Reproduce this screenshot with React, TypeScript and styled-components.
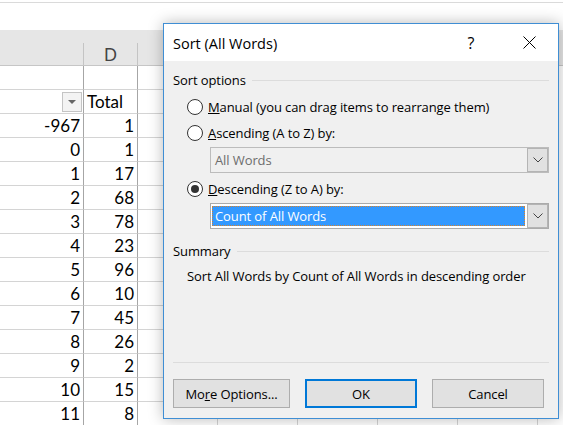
import React from "react";
import styled, { createGlobalStyle, css } from "styled-components";

const Global = createGlobalStyle`
  html, body { margin: 0; padding: 0; background: #fff; }
  body { width: 563px; height: 425px; overflow: hidden; }
`;

const Page = styled.div`
  position: relative;
  width: 563px;
  height: 425px;
  overflow: hidden;
  background: #fff;
  font-family: Lato, "Liberation Sans", sans-serif;
`;

const TopStrip = styled.div`
  margin-top: 2px;
  height: 27px;
  border-top: 1px solid #dadada;
  background: #fff;
`;

const HeaderBand = styled.div`
  height: 36px;
  box-sizing: border-box;
  background: #e6e6e6;
  padding-top: 13px;
  border-bottom: 1px solid #c6c6c6;
  display: flex;
`;

const HeaderCell = styled.div<{ $w: number }>`
  width: ${(p) => p.$w}px;
  flex: none;
  box-sizing: border-box;
  border-right: 1px solid #c4c4c4;
  display: flex;
  align-items: center;
  justify-content: center;
  font-size: 17px;
  color: #444;
`;

const Row = styled.div`
  display: flex;
  height: 24px;
`;

const Cell = styled.div<{ $w: number; $strong?: boolean; $align?: string }>`
  width: ${(p) => p.$w}px;
  flex: none;
  box-sizing: border-box;
  border-right: 1px solid ${(p) => (p.$strong ? "#a6a6a6" : "#d4d4d4")};
  border-bottom: 1px solid #d4d4d4;
  display: flex;
  align-items: center;
  justify-content: ${(p) => (p.$align === "left" ? "flex-start" : "flex-end")};
  padding: 0 3px;
  font-size: 17px;
  color: #000;
`;

const FilterButton = styled.div`
  width: 20px;
  height: 20px;
  box-sizing: border-box;
  border: 1px solid #c4c4c4;
  background: #f3f3f3;
  margin-right: -2px;
  display: flex;
  align-items: center;
  justify-content: center;
  &::after {
    content: "";
    border-left: 4px solid transparent;
    border-right: 4px solid transparent;
    border-top: 4px solid #666;
    margin-top: 1px;
  }
`;

const Dialog = styled.div`
  position: absolute;
  left: 163px;
  top: 23px;
  width: 396px;
  height: 396px;
  box-sizing: border-box;
  border: 1px solid #3f8ed4;
  box-shadow: 0 0 14px rgba(0, 0, 0, 0.28);
  display: flex;
  flex-direction: column;
  font-family: "Open Sans", "Noto Sans", sans-serif;
  font-size: 13px;
  letter-spacing: -0.1px;
  color: #000;
`;

const TitleBar = styled.div`
  height: 37px;
  flex: none;
  background: #fff;
  display: flex;
  align-items: center;
  padding-left: 9px;
`;

const Title = styled.div`
  flex: 1;
  font-size: 14.5px;
  letter-spacing: 0;
  padding-top: 1px;
`;

const TitleButton = styled.div`
  width: 58px;
  height: 37px;
  display: flex;
  align-items: center;
  justify-content: center;
  font-size: 16px;
`;

const Body = styled.div`
  flex: 1;
  background: #f0f0f0;
  display: flex;
  flex-direction: column;
  padding: 9px 9px 10px 9px;
`;

const GroupHeader = styled.div<{ $mt?: number }>`
  display: flex;
  align-items: center;
  gap: 6px;
  height: 20px;
  margin-top: ${(p) => p.$mt ?? 0}px;
  &::after {
    content: "";
    flex: 1;
    height: 1px;
    background: #dcdcdc;
  }
`;

const RadioRow = styled.div<{ $mt?: number }>`
  display: flex;
  align-items: center;
  height: 26px;
  padding-left: 14px;
  gap: 5px;
  margin-top: ${(p) => p.$mt ?? 0}px;
`;

const RadioCircle = styled.span<{ $checked?: boolean }>`
  width: 16px;
  height: 16px;
  box-sizing: border-box;
  border: 1px solid #333;
  border-radius: 50%;
  background: #fff;
  flex: none;
  display: flex;
  align-items: center;
  justify-content: center;
  &::after {
    content: "";
    width: 8px;
    height: 8px;
    border-radius: 50%;
    background: #333;
    display: ${(p) => (p.$checked ? "block" : "none")};
  }
`;

const Combo = styled.div<{ $disabled?: boolean; $mt?: number }>`
  margin-left: 37px;
  margin-top: ${(p) => p.$mt ?? 0}px;
  height: 26px;
  box-sizing: border-box;
  display: flex;
  border: 1px solid ${(p) => (p.$disabled ? "#bcbcbc" : "#ababab")};
  background: ${(p) => (p.$disabled ? "#f0f0f0" : "#fff")};
`;

const ComboValue = styled.div<{ $selected?: boolean; $disabled?: boolean }>`
  flex: 1;
  display: flex;
  align-items: center;
  padding-left: 4px;
  color: ${(p) => (p.$disabled ? "#6d6d6d" : "#000")};
  ${(p) =>
    p.$selected &&
    css`
      margin: 2px 2px 2px 1px;
      padding-left: 3px;
      background: #3399ff;
      color: #fff;
      outline: 1px dotted #d9822b;
      outline-offset: -1px;
    `}
`;

const ComboButton = styled.div`
  width: 21px;
  box-sizing: border-box;
  border: 1px solid #b4b4b4;
  background: #e1e1e1;
  display: flex;
  align-items: center;
  justify-content: center;
`;

const SummaryText = styled.div`
  margin-top: 5px;
  padding-left: 14px;
  height: 20px;
  display: flex;
  align-items: center;
  white-space: nowrap;
`;

const Spacer = styled.div`
  flex: 1;
`;

const Separator = styled.div`
  height: 1px;
  background: #dcdcdc;
`;

const ButtonRow = styled.div`
  display: flex;
  gap: 15px;
  margin-top: 16px;
`;

const Button = styled.div<{ $w: number; $default?: boolean }>`
  width: ${(p) => p.$w}px;
  height: 29px;
  box-sizing: border-box;
  background: #e1e1e1;
  border: ${(p) => (p.$default ? "2px solid #0078d7" : "1px solid #adadad")};
  display: flex;
  align-items: center;
  justify-content: center;
`;

const Chevron = () => (
  <svg width="10" height="6" viewBox="0 0 10 6">
    <path d="M0.5 0.5 L5 5 L9.5 0.5" fill="none" stroke="#444" strokeWidth="1" />
  </svg>
);

const CloseIcon = () => (
  <svg width="13" height="13" viewBox="0 0 13 13">
    <path d="M0.5 0.5 L12.5 12.5 M12.5 0.5 L0.5 12.5" stroke="#000" strokeWidth="1" />
  </svg>
);

const cols = [84, 54, 80, 80, 80, 80, 80];
const data: [string, string][] = [
  ["-967", "1"],
  ["0", "1"],
  ["1", "17"],
  ["2", "68"],
  ["3", "78"],
  ["4", "23"],
  ["5", "96"],
  ["6", "10"],
  ["7", "45"],
  ["8", "26"],
  ["9", "2"],
  ["10", "15"],
  ["11", "8"],
];

const Rest = () => (
  <>
    {cols.slice(2).map((w, i) => (
      <Cell key={i} $w={w} />
    ))}
  </>
);

export default function App() {
  return (
    <Page>
      <Global />
      <TopStrip />
      <HeaderBand>
        <HeaderCell $w={84} />
        <HeaderCell $w={54}>D</HeaderCell>
        {cols.slice(2).map((w, i) => (
          <HeaderCell key={i} $w={w} />
        ))}
      </HeaderBand>
      <Row>
        <Cell $w={84} $strong />
        <Cell $w={54} $strong />
        <Rest />
      </Row>
      <Row>
        <Cell $w={84} $strong>
          <FilterButton />
        </Cell>
        <Cell $w={54} $strong $align="left">
          Total
        </Cell>
        <Rest />
      </Row>
      {data.map(([a, b]) => (
        <Row key={a}>
          <Cell $w={84} $strong>
            {a}
          </Cell>
          <Cell $w={54} $strong>
            {b}
          </Cell>
          <Rest />
        </Row>
      ))}

      <Dialog>
        <TitleBar>
          <Title>Sort (All Words)</Title>
          <TitleButton>?</TitleButton>
          <TitleButton>
            <CloseIcon />
          </TitleButton>
        </TitleBar>
        <Body>
          <GroupHeader>Sort options</GroupHeader>
          <RadioRow $mt={4}>
            <RadioCircle />
            <span>
              <u>M</u>anual (you can drag items to rearrange them)
            </span>
          </RadioRow>
          <RadioRow>
            <RadioCircle />
            <span>
              <u>A</u>scending (A to Z) by:
            </span>
          </RadioRow>
          <Combo $disabled $mt={1}>
            <ComboValue $disabled>All Words</ComboValue>
            <ComboButton>
              <Chevron />
            </ComboButton>
          </Combo>
          <RadioRow $mt={3}>
            <RadioCircle $checked />
            <span>
              <u>D</u>escending (Z to A) by:
            </span>
          </RadioRow>
          <Combo $mt={1}>
            <ComboValue $selected>Count of All Words</ComboValue>
            <ComboButton>
              <Chevron />
            </ComboButton>
          </Combo>
          <GroupHeader $mt={12}>Summary</GroupHeader>
          <SummaryText>Sort All Words by Count of All Words in descending order</SummaryText>
          <Spacer />
          <Separator />
          <ButtonRow>
            <Button $w={117}>
              <span>
                Mo<u>r</u>e Options...
              </span>
            </Button>
            <Button $w={112} $default>
              OK
            </Button>
            <Button $w={112}>Cancel</Button>
          </ButtonRow>
        </Body>
      </Dialog>
    </Page>
  );
}
